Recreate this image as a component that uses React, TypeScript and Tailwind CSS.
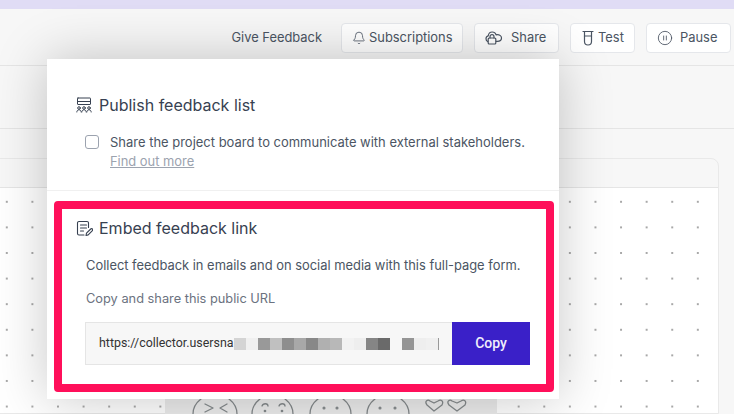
import { Bell, CirclePause } from 'lucide-react'

const blurBlocks = [
  'bg-[#d4d4d4]',
  'bg-[#f0f0f0]',
  'bg-[#999999]',
  'bg-[#c0c0c0]',
  'bg-[#8e8e8e]',
  'bg-[#a8a8a8]',
  'bg-[#888888]',
  'bg-[#b0b0b0]',
  'bg-[#b8b8b8]',
  'bg-[#f2f2f2]',
  'bg-[#eeeeee]',
  'bg-[#858585]',
  'bg-[#6a6a6a]',
  'bg-[#f7f7f7]',
  'bg-[#959595]',
  'bg-[#eeeeee]',
  'bg-[#f0f0f0]',
]

function CloudLockIcon() {
  return (
    <svg width="18" height="16" viewBox="0 0 18 16" fill="none" stroke="currentColor" strokeWidth="1.2" strokeLinecap="round" strokeLinejoin="round">
      <path d="M2.6 11.5C1.5 10.9 1 9.9 1 8.8 1 7.2 2 6.1 3.2 5.8 3.6 3.5 5.2 2 7.2 2c1.9 0 3.3 1.1 3.9 2.8.4-.1.8-.2 1.2-.2 2.4 0 4.2 1.6 4.2 3.4 0 1.9-1.8 3.4-4.2 3.4h-1" />
      <rect x="3.2" y="8" width="7.6" height="6" rx="1" />
      <path d="M5 8V6.7a2 2 0 0 1 4 0V8" />
    </svg>
  )
}

function TestTubeIcon() {
  return (
    <svg width="14" height="16" viewBox="0 0 14 16" fill="none" stroke="currentColor" strokeWidth="1.2" strokeLinecap="round" strokeLinejoin="round">
      <path d="M2 1.5h10" />
      <path d="M3.5 1.5v10a3.5 3.5 0 0 0 7 0v-10" />
      <path d="M3.5 6h7" />
    </svg>
  )
}

function BoardIcon() {
  return (
    <svg width="16" height="16" viewBox="0 0 16 16" fill="none" stroke="currentColor" strokeWidth="1" strokeLinecap="round" strokeLinejoin="round">
      <rect x="1.5" y="1" width="13" height="6.5" rx="0.5" />
      <path d="M1.5 4.5h13" />
      <circle cx="3" cy="11" r="1.3" />
      <circle cx="8" cy="11" r="1.3" />
      <circle cx="13" cy="11" r="1.3" />
      <path d="M0.8 15c0-1.3 1-2.2 2.2-2.2s2.2.9 2.2 2.2M5.8 15c0-1.3 1-2.2 2.2-2.2s2.2.9 2.2 2.2M10.8 15c0-1.3 1-2.2 2.2-2.2s2.2.9 2.2 2.2" />
    </svg>
  )
}

function FormEditIcon() {
  return (
    <svg width="17" height="17" viewBox="0 0 17 17" fill="none" stroke="currentColor" strokeWidth="1.1" strokeLinecap="round" strokeLinejoin="round">
      <path d="M8 15H3a1.5 1.5 0 0 1-1.5-1.5V3A1.5 1.5 0 0 1 3 1.5h8A1.5 1.5 0 0 1 12.5 3v4.5" />
      <path d="M4.5 5h6M4.5 8h6M4.5 11h3" />
      <path d="M10 15.5l.5-2.3 4.2-4.2a1.2 1.2 0 0 1 1.7 1.7l-4.2 4.2z" />
    </svg>
  )
}

function Faces() {
  return (
    <svg width="332" height="15" viewBox="0 0 332 15" fill="none" stroke="#858a8c" strokeWidth="1.3" strokeLinecap="round" strokeLinejoin="round">
      <path d="M36 0Q28 6 28 15M64 0Q72 6 72 15" />
      <path d="M40 5l8 4-8 4M62 5l-7 4 7 4" />
      <path d="M95 0Q87 6 87 15M120 0Q128 6 128 15" />
      <path d="M97 7c1-3 6-3 6 0M114 7c1-3 6-3 6 0" />
      <circle cx="100" cy="12" r="0.7" />
      <circle cx="117" cy="12" r="0.7" />
      <path d="M153 0Q145 6 145 15M178 0Q186 6 186 15" />
      <circle cx="159" cy="9" r="0.9" />
      <circle cx="172" cy="9" r="0.9" />
      <path d="M210 0Q202 6 202 15M236 0Q244 6 244 15" />
      <circle cx="215" cy="9" r="0.9" />
      <circle cx="230" cy="9" r="0.9" />
      <path d="M269 12L262 6c-3-4 1-6 3-4l4 2 4-2c3-2 6 0 4 4z" />
      <path d="M292 12L284 6c-3-4 1-6 3-4l5 2 4-2c3-2 6 0 4 4z" />
    </svg>
  )
}

export default function App() {
  return (
    <div className="relative w-[734px] h-[414px] overflow-hidden bg-[#f7f7f7] flex flex-col font-['Inter',sans-serif] text-[#374151]">
      <div className="h-[9px] bg-[#e0dcf5]" />

      {/* Header */}
      <header className="h-[57px] flex items-center justify-end gap-[11px] pr-[3px] pt-[1px] border-b border-[#e5e5e5]">
        <span className="mr-[8px] text-[12.9px] text-[#4b5563]">Give Feedback</span>
        <button className="h-[30px] w-[122px] pl-[10px] flex items-center gap-[3px] rounded bg-white border border-[#e5e7eb] text-[12.9px] text-[#4b5563]">
          <Bell className="w-[14px] h-[14px]" strokeWidth={1.4} />
          Subscriptions
        </button>
        <button className="h-[30px] w-[85px] pl-[10px] flex items-center gap-[8px] rounded bg-white border border-[#e5e7eb] text-[12.9px] text-[#4b5563]">
          <CloudLockIcon />
          Share
        </button>
        <button className="h-[30px] w-[65px] pl-[10px] flex items-center gap-[3px] rounded bg-white border border-[#e5e7eb] text-[12.9px] text-[#4b5563]">
          <TestTubeIcon />
          Test
        </button>
        <button className="h-[30px] w-[85px] pl-[10px] flex items-center gap-[7px] rounded bg-white border border-[#e5e7eb] text-[12.9px] text-[#4b5563]">
          <CirclePause className="w-[16px] h-[16px]" strokeWidth={1.3} />
          Pause
        </button>
      </header>

      <div className="h-[63px] shrink-0 border-b border-[#e5e5e5]" />

      {/* Board behind the dialog */}
      <div className="mt-[29px] mr-[15px] -ml-px flex-1 rounded-tr-lg border border-[#e9e9e9] flex flex-col">
        <div className="h-[29px] shrink-0 border-b border-[#e5e5e5]" />
        <div className="flex-1 bg-white bg-[radial-gradient(#a8a8a8_0.8px,transparent_0.8px)] bg-[length:25.6px_25.6px] bg-[position:-6px_1px]" />
      </div>

      {/* Emoji card */}
      <div className="absolute left-[165px] top-[399px] w-[332px] h-[15px] bg-[#ececec]">
        <Faces />
      </div>

      {/* Share popover */}
      <div className="absolute left-[47px] top-[59px] w-[512px] h-[340px] bg-white shadow-[0_0_50px_rgba(0,0,0,0.22)] flex flex-col">
        <section className="h-[132px] shrink-0 border-b border-[#f0f0f0] pl-[29px] pt-[36px]">
          <h2 className="flex items-center gap-[7px] text-[16px] leading-[20px] text-[#374151]">
            <BoardIcon />
            Publish feedback list
          </h2>
          <div className="mt-[18px] ml-[9px] flex gap-[10px]">
            <span className="mt-[2px] w-[14px] h-[14px] shrink-0 rounded-[3px] border border-[#9ca3af] bg-white" />
            <div className="ml-px text-[12.9px] leading-[19px]">
              <p className="text-[12.97px] text-[#4b5563]">Share the project board to communicate with external stakeholders.</p>
              <a className="text-[#9ca3af] underline">Find out more</a>
            </div>
          </div>
        </section>

        {/* Highlighted embed section */}
        <section className="mt-[10px] ml-[7px] mr-[5px] h-[191px] rounded border-[8px] border-[#ff0f5a] pl-[14px] pr-[16px] pt-[9px]">
          <h2 className="flex items-center gap-[6px] text-[16px] leading-[20px] text-[#374151]">
            <FormEditIcon />
            Embed feedback link
          </h2>
          <p className="mt-[19px] ml-[10px] text-[12.9px] leading-[18px] text-[#4b5563]">
            Collect feedback in emails and on social media with this full-page form.
          </p>
          <p className="mt-[15px] ml-[10px] text-[12.8px] leading-[18px] text-[#6b7280]">Copy and share this public URL</p>
          <div className="mt-[14px] ml-[9px] h-[43px] flex">
            <div className="flex-1 flex items-center overflow-hidden bg-[#f7f7f7] border border-r-0 border-[#e5e5e5] pl-[13px] font-['Roboto',sans-serif] text-[12.4px] text-[#333333]">
              <span>https://collector.usersna</span>
              <span className="ml-px flex h-[12px]">
                {blurBlocks.map((color, i) => (
                  <span key={i} className={`w-[12px] h-[12px] ${color}`} />
                ))}
                <span className="w-px h-[12px] bg-[#999999]" />
              </span>
            </div>
            <button className="w-[78px] bg-[#3a20c8] text-[#f0eefc] font-['Roboto',sans-serif] font-medium text-[14px]">Copy</button>
          </div>
        </section>
      </div>
    </div>
  )
}
